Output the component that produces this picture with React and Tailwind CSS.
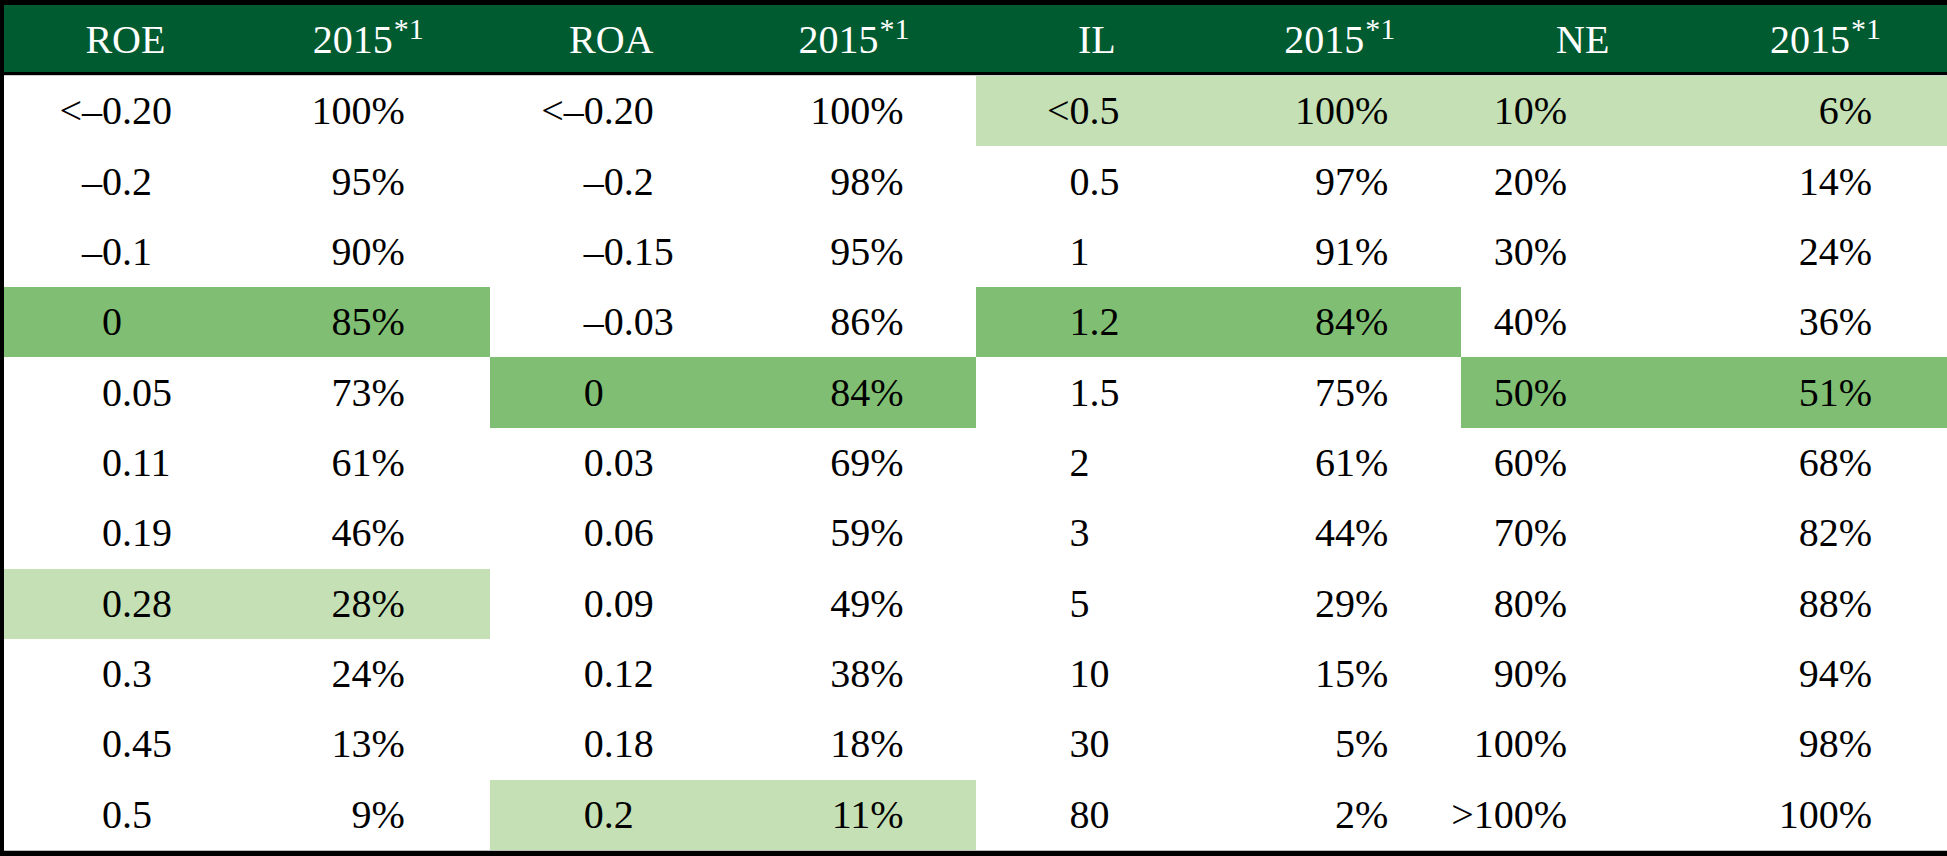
import React from "react";

const roe = [["<–", "0.20"], ["–", "0.2"], ["–", "0.1"], ["", "0"], ["", "0.05"], ["", "0.11"], ["", "0.19"], ["", "0.28"], ["", "0.3"], ["", "0.45"], ["", "0.5"]];
const roePct = ["100%", "95%", "90%", "85%", "73%", "61%", "46%", "28%", "24%", "13%", "9%"];
const roa = [["<–", "0.20"], ["", "–0.2"], ["", "–0.15"], ["", "–0.03"], ["", "0"], ["", "0.03"], ["", "0.06"], ["", "0.09"], ["", "0.12"], ["", "0.18"], ["", "0.2"]];
const roaPct = ["100%", "98%", "95%", "86%", "84%", "69%", "59%", "49%", "38%", "18%", "11%"];
const il = [["<", "0.5"], ["", "0.5"], ["", "1"], ["", "1.2"], ["", "1.5"], ["", "2"], ["", "3"], ["", "5"], ["", "10"], ["", "30"], ["", "80"]];
const ilPct = ["100%", "97%", "91%", "84%", "75%", "61%", "44%", "29%", "15%", "5%", "2%"];
const ne = ["10%", "20%", "30%", "40%", "50%", "60%", "70%", "80%", "90%", "100%", ">100%"];
const nePct = ["6%", "14%", "24%", "36%", "51%", "68%", "82%", "88%", "94%", "98%", "100%"];

// highlight per row: [roe, roa, il, ne]
const LIGHT = "bg-[#c5e0b4]";
const MID = "bg-[#80bf73]";
const marks = {
  0: [null, null, LIGHT, LIGHT],
  3: [MID, null, MID, null],
  4: [null, MID, null, MID],
  7: [LIGHT, null, null, null],
  10: [null, LIGHT, null, null],
};

function Anchored({ pre, val, offset, bg }) {
  return (
    <div className={`flex items-center ${bg || ""}`}>
      <span className={`shrink-0 text-right ${offset}`}>{pre}</span>
      <span>{val}</span>
    </div>
  );
}

function Pct({ v, pad, bg }) {
  return <div className={`flex items-center justify-end ${pad} ${bg || ""}`}>{v}</div>;
}

function Head({ children }) {
  return <div className="flex items-center justify-center pt-[2px]">{children}</div>;
}

export default function App() {
  return (
    <div className="w-[1947px] h-[856px] bg-black pt-[5px] pb-[5px] pl-[4px] font-['Liberation_Serif',serif] text-[40px] text-black flex flex-col">
      <div className="grid grid-cols-8 h-[67px] bg-[#005b30] text-white">
        {["ROE", "ROA", "IL", "NE"].map((h) => (
          <React.Fragment key={h}>
            <Head>{h}</Head>
            <Head>
              2015<sup className="text-[30px] relative top-[-11px] ml-[1px]">*1</sup>
            </Head>
          </React.Fragment>
        ))}
      </div>
      <div className="h-[3px] bg-black" />
      <div className="h-px bg-[#cfcfcf]" />
      <div className="flex flex-col bg-white h-[774px]">
        {roe.map((r, i) => {
          const m = marks[i] || [];
          return (
            <div key={i} className="grid grid-cols-8 flex-1">
              <Anchored pre={r[0]} val={r[1]} offset="w-[98px]" bg={m[0]} />
              <Pct v={roePct[i]} pad="pr-[85px]" bg={m[0]} />
              <Anchored pre={roa[i][0]} val={roa[i][1]} offset="w-[94px]" bg={m[1]} />
              <Pct v={roaPct[i]} pad="pr-[72px]" bg={m[1]} />
              <Anchored pre={il[i][0]} val={il[i][1]} offset="w-[94px]" bg={m[2]} />
              <Pct v={ilPct[i]} pad="pr-[73px]" bg={m[2]} />
              <Pct v={ne[i]} pad="pr-[137px]" bg={m[3]} />
              <Pct v={nePct[i]} pad="pr-[75px]" bg={m[3]} />
            </div>
          );
        })}
      </div>
      <div className="h-px bg-[#bdbdbd]" />
    </div>
  );
}
